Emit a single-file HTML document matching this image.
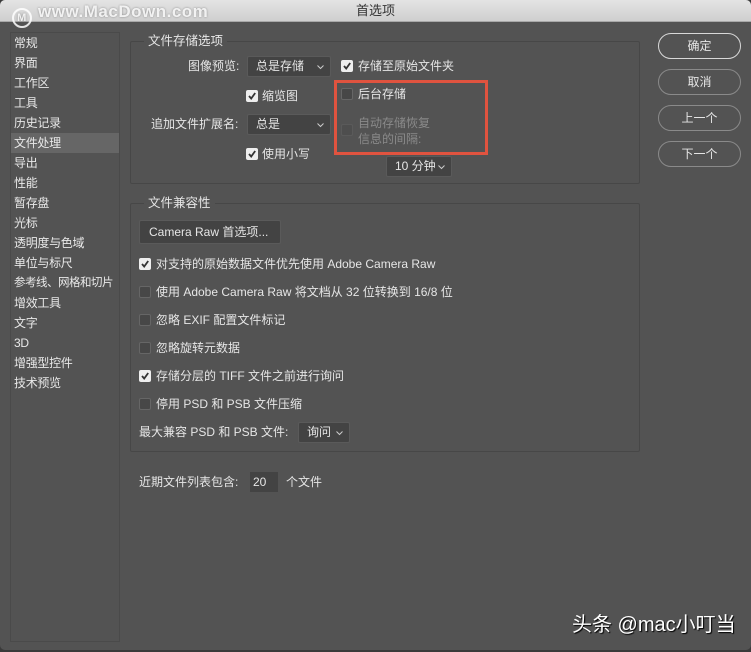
<!DOCTYPE html>
<html><head><meta charset="utf-8"><style>
*{box-sizing:border-box;margin:0;padding:0}
body{width:751px;height:652px;background:#3a3a3a;overflow:hidden;font-family:"Liberation Sans","Noto Sans CJK SC",sans-serif;font-size:12px;color:#e6e6e6;position:relative}
.win{position:absolute;left:0;top:0;width:751px;height:650px;background:#535353;border-radius:5px;overflow:hidden}
.title{position:absolute;left:0;top:0;width:751px;height:22px;background:linear-gradient(#e4e4e4,#cfcfcf);border-bottom:1px solid #a8a8a8;color:#333;text-align:center;line-height:22px;font-size:13px}
.wm{position:absolute;left:12px;top:2px;color:rgba(255,255,255,.85);font-size:17px;font-weight:bold;letter-spacing:.5px;text-shadow:0 0 2px #888;line-height:20px}
.wm i{display:inline-block;width:20px;height:20px;border:2px solid rgba(255,255,255,.85);border-radius:50%;vertical-align:-4px;margin-right:6px;font-style:normal;font-size:11px;text-align:center;line-height:16px}
.side{position:absolute;left:10px;top:32px;width:110px;height:610px;border:1px solid #4a4a4a;background:#535353}
.side div{height:20px;line-height:20px;padding-left:3px;font-size:12px;color:#e8e8e8;white-space:nowrap;letter-spacing:-0.3px}
.side .sel{background:#666}
.a{position:absolute;white-space:nowrap;line-height:14px}
.grp{position:absolute;border:1px solid #474747;border-radius:2px}
.gl{position:absolute;background:#535353;padding:0 4px;font-size:12.5px;line-height:14px}
.sel2{position:absolute;background:#434343;border:1px solid #5a5a5a;border-radius:2px;height:21px;line-height:19px;padding-left:8px;font-size:12px}
.sel2 svg{position:absolute;right:6px;top:8px}
.cb{position:absolute;width:12px;height:12px;border-radius:2px;background:#eee}
.cb svg{position:absolute;left:1px;top:1px}
.cb.off{background:#474747;border:1px solid #666}
.btn{position:absolute;left:658px;width:83px;height:26px;border:1px solid #8a8a8a;border-radius:13px;text-align:center;line-height:24px;font-size:12px}
</style></head><body><div class="win">
<div class="title">首选项</div>
<div class="wm"><i>M</i>www.MacDown.com</div>
<div class="side">
<div>常规</div><div>界面</div><div>工作区</div><div>工具</div><div>历史记录</div><div class="sel">文件处理</div><div>导出</div><div>性能</div><div>暂存盘</div><div>光标</div><div>透明度与色域</div><div>单位与标尺</div><div style="font-size:11.5px;letter-spacing:-0.5px">参考线、网格和切片</div><div>增效工具</div><div>文字</div><div>3D</div><div>增强型控件</div><div>技术预览</div>
</div>

<div class="grp" style="left:130px;top:41px;width:510px;height:143px"></div>
<div class="gl" style="left:144px;top:34px">文件存储选项</div>
<div class="a" style="left:188px;top:59px">图像预览:</div>
<div class="sel2" style="left:247px;top:56px;width:84px">总是存储<svg width="7" height="5"><path d="M.5 .5L3.5 3.5L6.5 .5" stroke="#ccc" fill="none"/></svg></div>
<div class="cb" style="left:341px;top:60px"><svg width="10" height="10"><path d="M2 5L4.2 7.5L8.2 2" stroke="#333" stroke-width="1.8" fill="none"/></svg></div><div class="a" style="left:358px;top:59px">存储至原始文件夹</div>
<div class="cb" style="left:246px;top:90px"><svg width="10" height="10"><path d="M2 5L4.2 7.5L8.2 2" stroke="#333" stroke-width="1.8" fill="none"/></svg></div><div class="a" style="left:262px;top:89px">缩览图</div>
<div class="a" style="left:151px;top:117px">追加文件扩展名:</div>
<div class="sel2" style="left:247px;top:114px;width:84px">总是<svg width="7" height="5"><path d="M.5 .5L3.5 3.5L6.5 .5" stroke="#ccc" fill="none"/></svg></div>
<div class="cb" style="left:246px;top:148px"><svg width="10" height="10"><path d="M2 5L4.2 7.5L8.2 2" stroke="#333" stroke-width="1.8" fill="none"/></svg></div><div class="a" style="left:262px;top:147px">使用小写</div>
<div style="position:absolute;left:334px;top:80px;width:154px;height:75px;border:3px solid #e0533f"></div>
<div class="cb off" style="left:341px;top:88px"></div><div class="a" style="left:358px;top:87px">后台存储</div>
<div class="cb off" style="left:341px;top:124px;opacity:.4"></div>
<div class="a" style="left:358px;top:115px;color:#8a8a8a;line-height:16px">自动存储恢复<br>信息的间隔:</div>
<div class="sel2" style="left:386px;top:156px;width:66px">10 分钟<svg width="7" height="5"><path d="M.5 .5L3.5 3.5L6.5 .5" stroke="#ccc" fill="none"/></svg></div>

<div class="grp" style="left:130px;top:203px;width:510px;height:249px"></div>
<div class="gl" style="left:144px;top:196px">文件兼容性</div>
<div class="a" style="left:139px;top:220px;width:142px;height:24px;background:#434343;border:1px solid #5a5a5a;border-radius:2px;line-height:22px;padding-left:9px">Camera Raw 首选项...</div>
<div class="cb" style="left:139px;top:258px"><svg width="10" height="10"><path d="M2 5L4.2 7.5L8.2 2" stroke="#333" stroke-width="1.8" fill="none"/></svg></div><div class="a" style="left:156px;top:257px">对支持的原始数据文件优先使用 Adobe Camera Raw</div>
<div class="cb off" style="left:139px;top:286px"></div><div class="a" style="left:156px;top:285px">使用 Adobe Camera Raw 将文档从 32 位转换到 16/8 位</div>
<div class="cb off" style="left:139px;top:314px"></div><div class="a" style="left:156px;top:313px">忽略 EXIF 配置文件标记</div>
<div class="cb off" style="left:139px;top:342px"></div><div class="a" style="left:156px;top:341px">忽略旋转元数据</div>
<div class="cb" style="left:139px;top:370px"><svg width="10" height="10"><path d="M2 5L4.2 7.5L8.2 2" stroke="#333" stroke-width="1.8" fill="none"/></svg></div><div class="a" style="left:156px;top:369px">存储分层的 TIFF 文件之前进行询问</div>
<div class="cb off" style="left:139px;top:398px"></div><div class="a" style="left:156px;top:397px">停用 PSD 和 PSB 文件压缩</div>
<div class="a" style="left:139px;top:425px">最大兼容 PSD 和 PSB 文件:</div>
<div class="sel2" style="left:298px;top:422px;width:52px">询问<svg width="7" height="5"><path d="M.5 .5L3.5 3.5L6.5 .5" stroke="#ccc" fill="none"/></svg></div>

<div class="a" style="left:139px;top:475px">近期文件列表包含:</div>
<div class="a" style="left:250px;top:472px;width:28px;height:20px;background:#434343;line-height:20px;padding-left:3px">20</div>
<div class="a" style="left:286px;top:475px">个文件</div>

<div class="btn" style="top:33px;border-color:#d8d8d8">确定</div>
<div class="btn" style="top:69px">取消</div>
<div class="btn" style="top:105px">上一个</div>
<div class="btn" style="top:141px">下一个</div>

<div class="a" style="left:572px;top:614px;font-size:20px;line-height:22px;color:#fff;text-shadow:1px 1px 1px #000">头条 @mac小叮当</div>
</div></body></html>
